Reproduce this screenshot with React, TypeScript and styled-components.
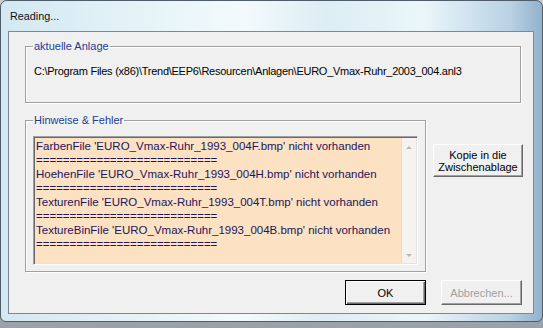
import React from 'react';
import styled, { createGlobalStyle } from 'styled-components';

const GlobalStyle = createGlobalStyle`
  html, body {
    margin: 0;
    padding: 0;
  }
  body {
    width: 543px;
    height: 328px;
    overflow: hidden;
    font-family: "Liberation Sans", Arial, sans-serif;
  }
`;

const Page = styled.div`
  width: 543px;
  height: 328px;
  background: linear-gradient(#c9cdd1, #9aa1a8);
`;

const Window = styled.div`
  box-sizing: border-box;
  width: 543px;
  height: 322px;
  border: 1px solid #4f5d6a;
  border-radius: 7px 7px 6px 6px;
  background: linear-gradient(
    to right,
    #d3e8f1 0%,
    #e4f3f8 25%,
    #f3fafc 45%,
    #dcedf4 60%,
    #eaf6fa 78%,
    #b9d2e4 94%,
    #93b2cc 100%
  );
  padding: 0 8px 7px 7px;
  display: flex;
  flex-direction: column;
`;

const TitleBar = styled.div`
  height: 30px;
  display: flex;
  align-items: center;
  padding-left: 2px;
  padding-bottom: 1px;
  box-sizing: border-box;
  font-size: 10.8px;
  color: #111;
`;

const Client = styled.div`
  box-sizing: border-box;
  width: 526px;
  height: 283px;
  border: 1px solid #7b8896;
  background: #f0f0f0;
  padding: 8px 0 0 16px;
  display: flex;
  flex-direction: column;
`;

const Group = styled.fieldset<{ $w: number; $h: number }>`
  box-sizing: border-box;
  margin: 0;
  width: ${p => p.$w}px;
  height: ${p => p.$h}px;
  min-width: 0;
  padding: 0 7px;
  border: 1px solid #a0a0a0;
  box-shadow: 1px 1px 0 #fff, inset 1px 1px 0 #fff;
`;

const Caption = styled.legend`
  padding: 0 1px;
  font-size: 11px;
  line-height: 13px;
  color: #1d3b8e;
`;

const PathText = styled.div`
  margin-top: 12px;
  padding-left: 1px;
  font-size: 11px;
  line-height: 13px;
  letter-spacing: -0.26px;
  color: #000;
  white-space: nowrap;
`;

const MiddleRow = styled.div`
  display: flex;
  align-items: flex-start;
  gap: 7px;
  margin-top: 11px;
`;

const ListBox = styled.div`
  box-sizing: border-box;
  margin-top: 9px;
  width: 385px;
  height: 129px;
  border-top: 1px solid #a0a0a0;
  border-left: 1px solid #a0a0a0;
  border-right: 1px solid #fff;
  border-bottom: 1px solid #fff;
  box-shadow: inset 1px 1px 0 #696969, inset -1px -1px 0 #e3e3e3;
  background: #fde1c3;
  display: flex;
`;

const Lines = styled.div`
  flex: 1;
  padding: 2px 0 0 2px;
  font-size: 11.5px;
  line-height: 14px;
  color: #22165a;
  white-space: nowrap;
  overflow: hidden;
`;

const ScrollBar = styled.div`
  width: 14px;
  margin: 1px 1px 1px 0;
  border-left: 1px solid #e8dccd;
  background: #f6f3ef;
  display: flex;
  flex-direction: column;
  justify-content: space-between;
  align-items: center;
  padding: 8px 0 6px;
`;

const Arrow = styled.div<{ $down?: boolean }>`
  width: 0;
  height: 0;
  border-left: 3px solid transparent;
  border-right: 3px solid transparent;
  ${p =>
    p.$down
      ? 'border-top: 3px solid #b8b8b8;'
      : 'border-bottom: 3px solid #b8b8b8;'}
`;

const Button = styled.button<{ $w: number; $h: number; $default?: boolean }>`
  box-sizing: border-box;
  width: ${p => p.$w}px;
  height: ${p => p.$h}px;
  margin: 0;
  padding: 0;
  font-family: "Liberation Sans", Arial, sans-serif;
  font-size: 11px;
  line-height: 12px;
  color: ${p => (p.disabled ? '#a0a0a0' : '#000')};
  background: #f0f0f0;
  border: 1px solid ${p => (p.$default ? '#000' : '#f0f0f0')};
  border-top-color: ${p => (p.$default ? '#000' : '#fff')};
  border-left-color: ${p => (p.$default ? '#000' : '#fff')};
  border-right-color: ${p => (p.$default ? '#000' : '#696969')};
  border-bottom-color: ${p => (p.$default ? '#000' : '#696969')};
  box-shadow: ${p =>
    p.$default
      ? 'inset 1px 1px 0 #fff, inset -1px -1px 0 #696969, inset -2px -2px 0 #a0a0a0'
      : 'inset -1px -1px 0 #a0a0a0'};
`;

const CopyButton = styled(Button)`
  margin-top: 30px;
  padding-top: 1px;
`;

const BottomRow = styled.div`
  display: flex;
  justify-content: flex-end;
  gap: 15px;
  margin-top: 8px;
  padding-right: 11px;
`;

const separator = '==========================='; // 27

const messages = [
  "FarbenFile 'EURO_Vmax-Ruhr_1993_004F.bmp' nicht vorhanden",
  separator,
  "HoehenFile 'EURO_Vmax-Ruhr_1993_004H.bmp' nicht vorhanden",
  separator,
  "TexturenFile 'EURO_Vmax-Ruhr_1993_004T.bmp' nicht vorhanden",
  separator,
  "TextureBinFile 'EURO_Vmax-Ruhr_1993_004B.bmp' nicht vorhanden",
  separator,
];

export default function App() {
  return (
    <>
      <GlobalStyle />
      <Page>
        <Window>
          <TitleBar>Reading...</TitleBar>
          <Client>
            <Group $w={496} $h={63}>
              <Caption>aktuelle Anlage</Caption>
              <PathText>
                C:\Program Files (x86)\Trend\EEP6\Resourcen\Anlagen\EURO_Vmax-Ruhr_2003_004.anl3
              </PathText>
            </Group>

            <MiddleRow>
              <Group $w={401} $h={158}>
                <Caption>Hinweise &amp; Fehler</Caption>
                <ListBox>
                  <Lines>
                    {messages.map((m, i) => (
                      <div key={i}>{m}</div>
                    ))}
                  </Lines>
                  <ScrollBar>
                    <Arrow />
                    <Arrow $down />
                  </ScrollBar>
                </ListBox>
              </Group>
              <CopyButton $w={90} $h={33}>
                Kopie in die
                <br />
                Zwischenablage
              </CopyButton>
            </MiddleRow>

            <BottomRow>
              <Button $w={81} $h={25} $default>
                OK
              </Button>
              <Button $w={81} $h={25} disabled>
                Abbrechen...
              </Button>
            </BottomRow>
          </Client>
        </Window>
      </Page>
    </>
  );
}
